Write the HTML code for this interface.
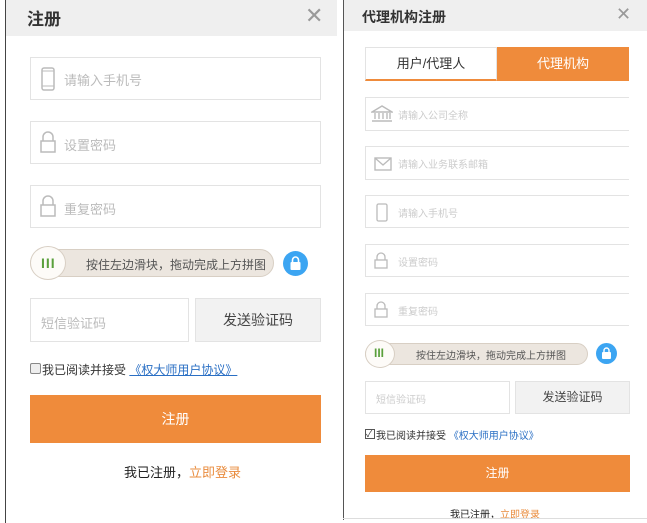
<!DOCTYPE html>
<html><head><meta charset="utf-8"><style>
*{margin:0;padding:0;box-sizing:border-box}
body{width:647px;height:523px;background:#fff;position:relative;overflow:hidden;font-family:"Liberation Sans","Noto Sans CJK SC",sans-serif}
.a{position:absolute}
.in{position:absolute;border:1px solid #e3e3e3;background:#fff;color:#bbb}
.r{border-right:none}
.ph{position:absolute;white-space:nowrap}
.x{color:#999;font-size:22px;line-height:1}
</style></head><body>
<div class="a" style="left:5px;top:0;width:1px;height:523px;background:#444"></div>
<div class="a" style="left:6px;top:0;width:331px;height:36px;background:#efefef"></div>
<div class="a" style="left:27px;top:5px;font-size:17px;font-weight:bold;color:#333">注册</div>
<div class="a x" style="left:305px;top:5px">✕</div>

<div class="in" style="left:30px;top:57px;width:291px;height:43px">
<svg class="a" style="left:10px;top:9px" width="14" height="24"><rect x="1" y="1" width="12" height="22" rx="2" fill="none" stroke="#bbb" stroke-width="1.5"/><line x1="1" y1="4" x2="13" y2="4" stroke="#bbb"/><line x1="1" y1="19" x2="13" y2="19" stroke="#bbb"/></svg>
<div class="ph" style="left:33px;top:12px;font-size:13px">请输入手机号</div></div>
<div class="in" style="left:30px;top:121px;width:291px;height:43px">
<svg class="a" style="left:9px;top:9px" width="16" height="22"><path d="M3 10V6a5 5 0 0 1 10 0v4" fill="none" stroke="#bbb" stroke-width="1.5"/><rect x="1" y="10" width="14" height="11" fill="none" stroke="#bbb" stroke-width="1.5"/></svg>
<div class="ph" style="left:33px;top:13px;font-size:13px">设置密码</div></div>
<div class="in" style="left:30px;top:185px;width:291px;height:43px">
<svg class="a" style="left:9px;top:9px" width="16" height="22"><path d="M3 10V6a5 5 0 0 1 10 0v4" fill="none" stroke="#bbb" stroke-width="1.5"/><rect x="1" y="10" width="14" height="11" fill="none" stroke="#bbb" stroke-width="1.5"/></svg>
<div class="ph" style="left:33px;top:13px;font-size:13px">重复密码</div></div>

<div class="a" style="left:30px;top:249px;width:244px;height:28px;border-radius:14px;background:#ece6df;border:1px solid #d8cfc4"></div>
<div class="a" style="left:30px;top:246px;width:36px;height:34px;border-radius:50%;background:#fdfbf8;border:1px solid #d8cfc4"></div>
<div class="a" style="left:41px;top:255px;font-size:14px;color:#5aa03c;font-weight:bold;letter-spacing:1px">III</div>
<div class="a" style="left:86px;top:256px;font-size:12px;color:#555">按住左边滑块，拖动完成上方拼图</div>
<div class="a" style="left:283px;top:251px;width:25px;height:25px;border-radius:50%;background:#3ca5f2"></div>
<svg class="a" style="left:289px;top:255px" width="13" height="16"><path d="M3.5 7V5a3 3 0 0 1 6 0v2" fill="none" stroke="#fff" stroke-width="1.6"/><rect x="1.5" y="7" width="10" height="8" rx="1" fill="#fff"/></svg>

<div class="in" style="left:30px;top:298px;width:159px;height:44px"><div class="ph" style="left:10px;top:14px;font-size:13px">短信验证码</div></div>
<div class="a" style="left:195px;top:298px;width:126px;height:44px;background:#f2f2f2;border:1px solid #e3e3e3;text-align:center;line-height:42px;font-size:14px;color:#444">发送验证码</div>

<div class="a" style="left:30px;top:363px;width:11px;height:11px;border:1px solid #888;border-radius:2px;background:#eee"></div>
<div class="a" style="left:42px;top:361px;font-size:12px;color:#333">我已阅读并接受 <span style="color:#2a6fc4;text-decoration:underline">《权大师用户协议》</span></div>
<div class="a" style="left:30px;top:395px;width:291px;height:48px;background:#ef8b3b;color:#fff;text-align:center;line-height:48px;font-size:14px">注册</div>
<div class="a" style="left:124px;top:462px;font-size:13px;color:#222">我已注册，<span style="color:#e98c3e">立即登录</span></div>

<div class="a" style="left:343px;top:0;width:1px;height:520px;background:#555"></div>
<div class="a" style="left:344px;top:0;width:303px;height:31px;background:#efefef"></div>
<div class="a" style="left:362px;top:7px;font-size:14px;font-weight:bold;color:#333">代理机构注册</div>
<div class="a x" style="left:616px;top:5px;font-size:18px">✕</div>
<div class="a" style="left:365px;top:47px;width:132px;height:34px;border:1px solid #e3e3e3;border-bottom:2px solid #ef8b3b;text-align:center;line-height:31px;font-size:13px;color:#333">用户/代理人</div>
<div class="a" style="left:497px;top:47px;width:132px;height:34px;background:#ef8b3b;color:#fff;text-align:center;line-height:33px;font-size:13px">代理机构</div>

<div class="in r" style="left:365px;top:97px;width:264px;height:34px">
<svg class="a" style="left:5px;top:7px" width="22" height="18"><path d="M11 1L1 7h20z" fill="none" stroke="#bbb" stroke-width="1.4"/><path d="M4 8v6M8 8v6M12 8v6M16 8v6M19 8v6M1 16h20" stroke="#bbb" stroke-width="1.4"/></svg>
<div class="ph" style="left:32px;top:9px;font-size:10px;color:#ccc">请输入公司全称</div></div>
<div class="in r" style="left:365px;top:146px;width:264px;height:34px">
<svg class="a" style="left:8px;top:10px" width="18" height="14"><rect x="1" y="1" width="16" height="12" fill="none" stroke="#bbb" stroke-width="1.4"/><path d="M1 1l8 7 8-7" fill="none" stroke="#bbb" stroke-width="1.4"/></svg>
<div class="ph" style="left:32px;top:9px;font-size:10px;color:#ccc">请输入业务联系邮箱</div></div>
<div class="in r" style="left:365px;top:195px;width:264px;height:33px">
<svg class="a" style="left:10px;top:7px" width="12" height="19"><rect x="1" y="1" width="10" height="17" rx="1.5" fill="none" stroke="#bbb" stroke-width="1.3"/></svg>
<div class="ph" style="left:32px;top:9px;font-size:10px;color:#ccc">请输入手机号</div></div>
<div class="in r" style="left:365px;top:244px;width:264px;height:33px">
<svg class="a" style="left:8px;top:7px" width="14" height="17"><path d="M3 8V5a4 4 0 0 1 8 0v3" fill="none" stroke="#bbb" stroke-width="1.3"/><rect x="1" y="8" width="12" height="8" fill="none" stroke="#bbb" stroke-width="1.3"/></svg>
<div class="ph" style="left:32px;top:9px;font-size:10px;color:#ccc">设置密码</div></div>
<div class="in r" style="left:365px;top:293px;width:264px;height:33px">
<svg class="a" style="left:8px;top:7px" width="14" height="17"><path d="M3 8V5a4 4 0 0 1 8 0v3" fill="none" stroke="#bbb" stroke-width="1.3"/><rect x="1" y="8" width="12" height="8" fill="none" stroke="#bbb" stroke-width="1.3"/></svg>
<div class="ph" style="left:32px;top:9px;font-size:10px;color:#ccc">重复密码</div></div>

<div class="a" style="left:365px;top:343px;width:223px;height:22px;border-radius:11px;background:#ece6df;border:1px solid #d8cfc4"></div>
<div class="a" style="left:365px;top:340px;width:30px;height:28px;border-radius:50%;background:#fdfbf8;border:1px solid #d8cfc4"></div>
<div class="a" style="left:374px;top:346px;font-size:12px;color:#5aa03c;font-weight:bold">III</div>
<div class="a" style="left:416px;top:347px;font-size:10px;color:#555">按住左边滑块，拖动完成上方拼图</div>
<div class="a" style="left:596px;top:343px;width:21px;height:21px;border-radius:50%;background:#3ca5f2"></div>
<svg class="a" style="left:601px;top:346px" width="11" height="14"><path d="M3 6V4.5a2.5 2.5 0 0 1 5 0V6" fill="none" stroke="#fff" stroke-width="1.4"/><rect x="1" y="6" width="9" height="7" rx="1" fill="#fff"/></svg>

<div class="in" style="left:365px;top:381px;width:145px;height:33px"><div class="ph" style="left:10px;top:9px;font-size:10px;color:#ccc">短信验证码</div></div>
<div class="a" style="left:515px;top:381px;width:115px;height:33px;background:#f2f2f2;border:1px solid #e3e3e3;text-align:center;line-height:31px;font-size:12px;color:#444">发送验证码</div>

<div class="a" style="left:365px;top:429px;width:10px;height:10px;border:1px solid #555;font-size:9px;line-height:8px;color:#333">✓</div>
<div class="a" style="left:376px;top:427px;font-size:10px;color:#333">我已阅读并接受 <span style="color:#2a6fc4">《权大师用户协议》</span></div>
<div class="a" style="left:365px;top:455px;width:265px;height:37px;background:#ef8b3b;color:#fff;text-align:center;line-height:37px;font-size:12px">注册</div>
<div class="a" style="left:450px;top:506px;font-size:10px;color:#222">我已注册，<span style="color:#e98c3e">立即登录</span></div>
<div class="a" style="left:343px;top:518px;width:304px;height:1px;background:#ddd"></div>
</body></html>
